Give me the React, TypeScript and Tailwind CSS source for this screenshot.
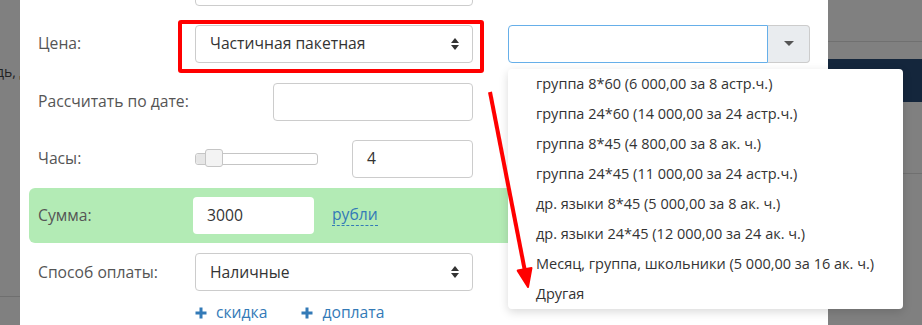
import React from 'react';

const items = [
  'группа 8*60 (6 000,00 за 8 астр.ч.)',
  'группа 24*60 (14 000,00 за 24 астр.ч.)',
  'группа 8*45 (4 800,00 за 8 ак. ч.)',
  'группа 24*45 (11 000,00 за 24 астр.ч.)',
  'др. языки 8*45 (5 000,00 за 8 ак. ч.)',
  'др. языки 24*45 (12 000,00 за 24 ак. ч.)',
  'Месяц, группа, школьники (5 000,00 за 16 ак. ч.)',
  'Другая',
];

function UpDown() {
  return (
    <svg width="10" height="14" viewBox="0 0 10 14" className="text-[#333]">
      <path d="M5 1 L9 6 H1 Z" fill="currentColor" />
      <path d="M5 13 L9 8 H1 Z" fill="currentColor" />
    </svg>
  );
}

function Plus() {
  return (
    <svg width="12" height="12" viewBox="0 0 12 12">
      <path d="M6 0.5 V11.5 M0.5 6 H11.5" stroke="#337ab7" strokeWidth="3" />
    </svg>
  );
}

export default function App() {
  return (
    <div className="relative w-[922px] h-[325px] overflow-hidden bg-[#808080] text-[15.7px] text-[#555] font-['Open_Sans',sans-serif]">
      <div className="flex h-full">
        {/* left backdrop */}
        <div className="relative w-[20px] shrink-0 overflow-hidden">
          <span className="absolute left-[-4px] top-[61px] whitespace-nowrap text-[14px] text-[#222]">дь, д</span>
          <div className="absolute left-0 top-[296px] w-full h-px bg-[#6f6f6f]" />
        </div>

        {/* modal */}
        <div className="w-[808px] shrink-0 bg-white px-[9px] flex flex-col">
          <div className="mt-[-31px] h-[38px] ml-[166px] w-[278px] rounded border border-[#ccc]" />

          {/* Цена */}
          <div className="mt-[19px] h-[38px] flex items-center pl-[9px]">
            <div className="w-[157px]">Цена:</div>
            <div className="w-[278px] h-[38px] rounded border border-[#ccc] flex items-center justify-between pl-[14px] pr-[12px] text-[#333]">
              <span>Частичная пакетная</span>
              <UpDown />
            </div>
            <div className="ml-[35px] flex h-[38px]">
              <div className="w-[260px] rounded-l border border-[#66afe9]" />
              <div className="w-[42px] rounded-r border border-l-0 border-[#ccc] bg-[#e9ecef] flex items-center justify-center">
                <svg width="10" height="6" viewBox="0 0 10 6">
                  <path d="M0 0 H10 L5 5 Z" fill="#555" />
                </svg>
              </div>
            </div>
          </div>

          {/* Рассчитать по дате */}
          <div className="mt-[20px] h-[38px] flex items-center pl-[9px]">
            <div className="w-[235px]">Рассчитать по дате:</div>
            <div className="w-[200px] h-[38px] rounded border border-[#ccc]" />
          </div>

          {/* Часы */}
          <div className="mt-[19px] h-[38px] flex items-center pl-[9px]">
            <div className="w-[157px]">Часы:</div>
            <div className="relative w-[123px] h-[12px] rounded-[3px] border border-[#c5c5c5] bg-white">
              <div className="absolute left-0 top-0 h-full w-[14px] bg-[#e6e6e6] rounded-l-[3px]" />
              <div className="absolute left-[9px] top-[-5px] w-[18px] h-[18px] rounded-[3px] border border-[#c5c5c5] bg-[#f3f3f3]" />
            </div>
            <div className="ml-[34px] w-[121px] h-[38px] rounded border border-[#ccc] flex items-center pl-[14px] text-[#333]">4</div>
          </div>

          {/* Сумма */}
          <div className="mt-[10px] h-[57px] flex items-center pl-[9px] bg-[#b3ebb5] rounded-l-[6px]">
            <div className="w-[155px]">Сумма:</div>
            <div className="w-[121px] h-[37px] rounded bg-white flex items-center pl-[14px] text-[#333]">3000</div>
            <span className="ml-[18px] text-[#337ab7] border-b border-dashed border-[#337ab7] leading-[18px] pb-[2px]">рубли</span>
            <span className="ml-[130px] text-[#337ab7] border-b border-dashed border-[#337ab7] leading-[18px] pb-[2px]">скидка</span>
          </div>

          {/* Способ оплаты */}
          <div className="mt-[10px] h-[38px] flex items-center pl-[9px]">
            <div className="w-[157px]">Способ оплаты:</div>
            <div className="w-[278px] h-[38px] rounded border border-[#ccc] flex items-center justify-between pl-[14px] pr-[12px] text-[#333]">
              <span>Наличные</span>
              <UpDown />
            </div>
          </div>

          <div className="mt-[10px] flex items-center pl-[166px] text-[#337ab7] gap-[34px]">
            <span className="flex items-center gap-[9px]"><Plus />скидка</span>
            <span className="flex items-center gap-[9px]"><Plus />доплата</span>
          </div>
        </div>

        {/* right backdrop */}
        <div className="flex-1 flex flex-col">
          <div className="mt-[41px] h-px bg-[#707070]" />
          <div className="mt-[17px] h-[43px] bg-[#14263c]" />
          <div className="mt-[71px] h-px bg-[#707070]" />
        </div>
      </div>

      {/* red highlight around the price select */}
      <div className="absolute left-[178px] top-[20px] w-[306px] h-[53px] border-[4px] border-[#ff0000] rounded-[3px]" />

      {/* dropdown */}
      <div className="absolute left-[508px] top-[69px] w-[395px] bg-white rounded-[4px] shadow-[0_3px_10px_rgba(0,0,0,0.15)] text-[14.5px] text-[#333]">
        {items.map((t) => (
          <div key={t} className="h-[30px] flex items-center pl-[28px] whitespace-nowrap">{t}</div>
        ))}
      </div>

      {/* red arrow */}
      <svg className="absolute left-0 top-0" width="922" height="325">
        <line x1="490" y1="92" x2="524.6" y2="269.3" stroke="#ff0000" strokeWidth="4" />
        <polygon points="528,287 531.5,267.9 517.7,270.6" fill="#ff0000" stroke="#ff0000" strokeWidth="2" strokeLinejoin="round" />
      </svg>
    </div>
  );
}
